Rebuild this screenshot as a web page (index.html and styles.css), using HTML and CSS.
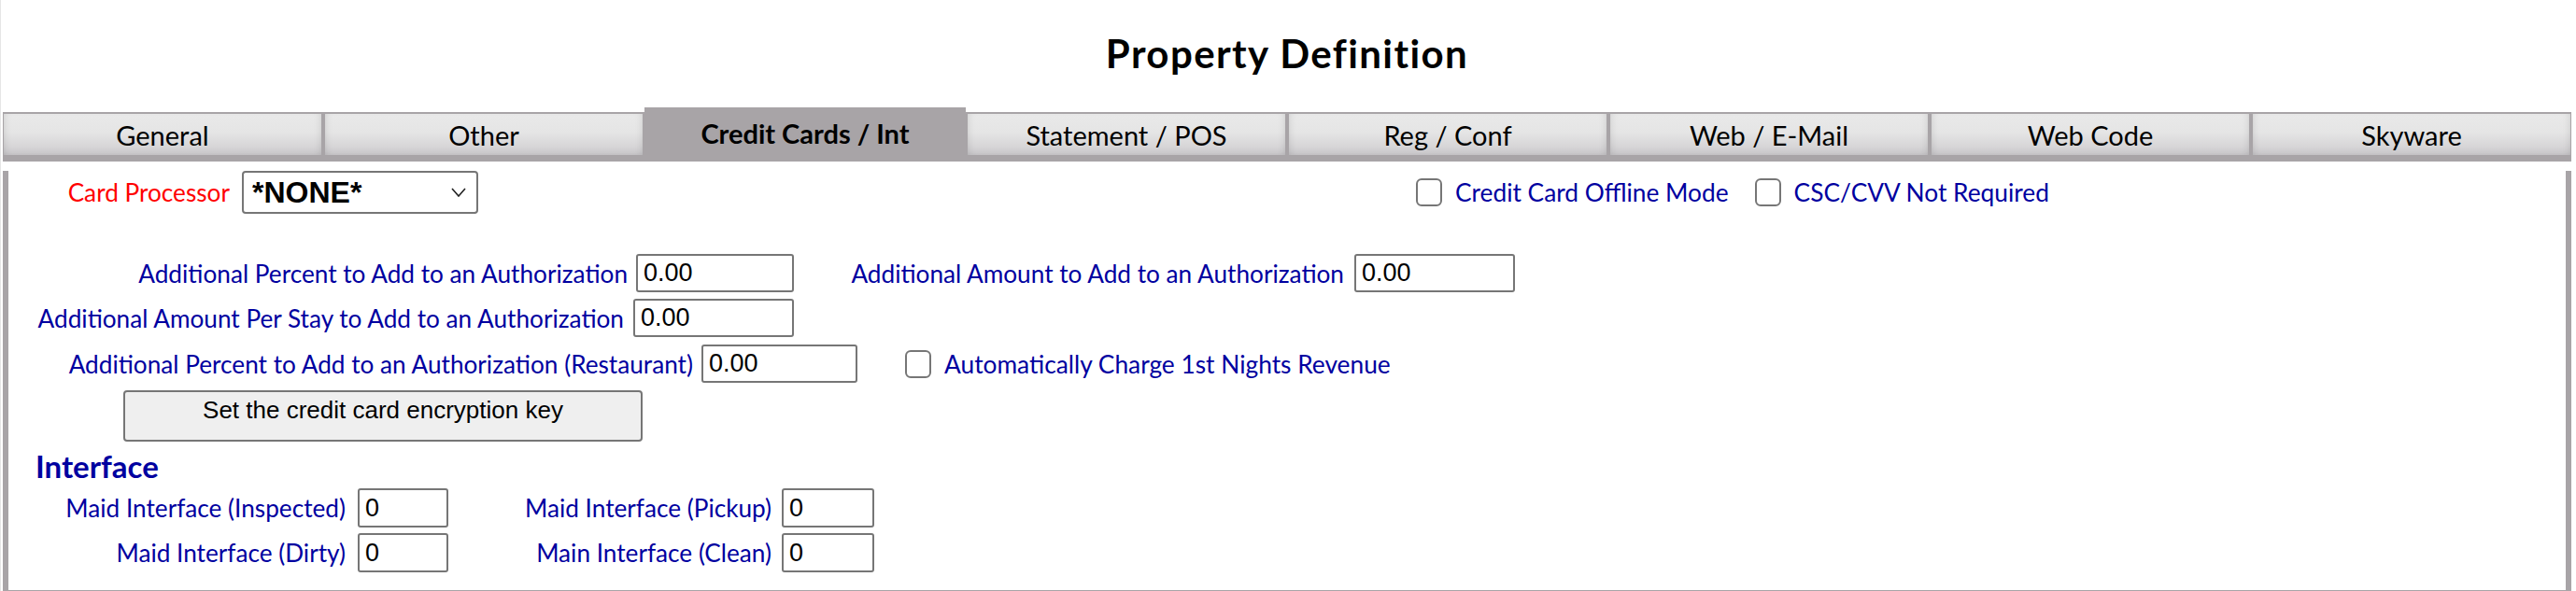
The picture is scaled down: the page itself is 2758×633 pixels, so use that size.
FILE: index.html
```html
<!DOCTYPE html>
<html lang="en">
<head>
    <meta charset="UTF-8">
    <title>Property Definition</title>
    <link rel="stylesheet" href="styles.css">
</head>
<body>
<div class="page">
    <h1 class="title">Property Definition</h1>

    <!-- Tabs -->
    <div class="tabs">
        <div class="tab">General</div>
        <div class="tab">Other</div>
        <div class="tab active">Credit Cards / Int</div>
        <div class="tab">Statement / POS</div>
        <div class="tab">Reg / Conf</div>
        <div class="tab">Web / E-Mail</div>
        <div class="tab">Web Code</div>
        <div class="tab">Skyware</div>
    </div>

    <div class="panel">
        <!-- Processor row -->
        <div class="row row-top">
            <div class="cell cell-proc">
                <label class="lbl lbl-red" for="processor">Card Processor</label>
            </div>
            <span class="select-wrap">
                <select id="processor" class="select">
                    <option>*NONE*</option>
                </select>
                <svg class="chevron" width="16" height="10" viewBox="0 0 16 10">
                    <polyline points="1,1 8,9 15,1" fill="none" stroke="#222" stroke-width="1.6"/>
                </svg>
            </span>
            <div class="checks checks-top">
                <label class="check"><input type="checkbox" class="box"><span>Credit Card Offline Mode</span></label>
                <label class="check"><input type="checkbox" class="box"><span>CSC/CVV Not Required</span></label>
            </div>
        </div>

        <!-- Authorization amounts -->
        <div class="row row-auth1">
            <div class="cell cell-841">
                <span class="lbl">Additional Percent to Add to an Authorization</span>
                <input class="txt w-169" value="0.00">
            </div>
            <div class="cell cell-772">
                <span class="lbl">Additional Amount to Add to an Authorization</span>
                <input class="txt w-172" value="0.00">
            </div>
        </div>
        <div class="row row-auth2">
            <div class="cell cell-841 gap-10">
                <span class="lbl">Additional Amount Per Stay to Add to an Authorization</span>
                <input class="txt w-172" value="0.00">
            </div>
        </div>
        <div class="row row-auth3">
            <div class="cell cell-909">
                <span class="lbl">Additional Percent to Add to an Authorization (Restaurant)</span>
                <input class="txt w-167" value="0.00">
            </div>
            <div class="checks checks-auto">
                <label class="check"><input type="checkbox" class="box"><span>Automatically Charge 1st Nights Revenue</span></label>
            </div>
        </div>

        <button class="key-btn">Set the credit card encryption key</button>

        <!-- Interface -->
        <h2 class="section">Interface</h2>
        <div class="maid-grid">
            <div class="cell gap-13">
                <span class="lbl">Maid Interface (Inspected)</span>
                <input class="txt w-97" value="0">
            </div>
            <div class="cell gap-11">
                <span class="lbl">Maid Interface (Pickup)</span>
                <input class="txt w-99" value="0">
            </div>
            <div class="cell gap-13">
                <span class="lbl">Maid Interface (Dirty)</span>
                <input class="txt w-97" value="0">
            </div>
            <div class="cell gap-11">
                <span class="lbl">Main Interface (Clean)</span>
                <input class="txt w-99" value="0">
            </div>
        </div>
    </div>
</div>
</body>
</html>
```

FILE: styles.css
```css
body {
    margin: 0;
    background: #fff;
    font-family: Lato, "Liberation Sans", sans-serif;
}
.page {
    border-left: 1px solid #e6e6e6;
    padding: 0 5px 0 2px;
}
.title {
    margin: 0;
    padding-top: 32px;
    font-size: 42px;
    line-height: 50px;
    letter-spacing: 1.4px;
    font-weight: bold;
    text-align: center;
    color: #000;
}

/* tabs */
.tabs {
    display: grid;
    grid-template-columns: repeat(8, 1fr);
    gap: 4px;
    margin-top: 38px;
    padding: 2px 1px 7px;
    background: #a8a4a7;
}
.tab {
    height: 44px;
    display: flex;
    align-items: center;
    justify-content: center;
    font-size: 29px;
    color: #000;
    background: linear-gradient(#e9e9e9, #e5e5e5 45%, #cecccf);
    box-shadow: inset 0 -6px 8px -4px rgba(0, 0, 0, 0.06), inset 6px 0 8px -6px rgba(0, 0, 0, 0.12), inset -6px 0 8px -6px rgba(0, 0, 0, 0.12);
}
.tab.active {
    margin: -7px -2px -3px;
    height: auto;
    background: #a8a4a7;
    box-shadow: none;
    font-weight: bold;
}

/* panel */
.panel {
    height: 449px;
    border: 6px solid #a8a4a7;
    border-top: 0;
    border-bottom-width: 8px;
    background: #fff;
}
.row {
    display: flex;
    align-items: center;
}
.cell {
    display: flex;
    align-items: center;
    justify-content: flex-end;
    gap: 9px;
}
.lbl {
    font-size: 26.2px;
    color: #0000a0;
    white-space: nowrap;
}
.lbl-red {
    color: #f00;
}

.row-top {
    margin-top: 10px;
    height: 46px;
}
.cell-proc {
    width: 237px;
}
.select-wrap {
    position: relative;
    margin-left: 13px;
}
.select {
    appearance: none;
    -webkit-appearance: none;
    display: block;
    width: 253px;
    height: 46px;
    margin: 0;
    padding: 0 0 0 9px;
    border: 2px solid #767676;
    border-radius: 4px;
    background: #fff;
    color: #000;
    font-family: "Liberation Sans", Arial, sans-serif;
    font-size: 32px;
    font-weight: bold;
}
.chevron {
    position: absolute;
    right: 13px;
    top: 18px;
}

.checks {
    display: flex;
    align-items: center;
    gap: 28px;
}
.checks-top {
    margin-left: 1004px;
}
.checks-auto {
    margin-left: 51px;
}
.check {
    display: flex;
    align-items: center;
    gap: 14px;
    font-size: 26.3px;
    color: #0000a0;
    white-space: nowrap;
}
.box {
    appearance: none;
    -webkit-appearance: none;
    width: 28px;
    height: 30px;
    margin: 0;
    border: 2px solid #767676;
    border-radius: 6px;
    background: #fff;
}

.txt {
    box-sizing: border-box;
    height: 41px;
    margin: 0;
    padding: 0 6px;
    border: 2px solid #767676;
    border-radius: 3px;
    font-family: "Liberation Sans", Arial, sans-serif;
    font-size: 27px;
    color: #000;
    background: #fff;
}
.w-97 { width: 97px; }
.w-99 { width: 99px; }
.w-167 { width: 167px; }
.w-169 { width: 169px; }
.w-172 { width: 172px; }

.row-auth1 {
    margin-top: 43px;
}
.row-auth2 {
    margin-top: 7px;
}
.row-auth3 {
    margin-top: 8px;
}
.cell-841 { width: 841px; }
.cell-909 { width: 909px; }
.cell-772 { width: 772px; gap: 11px; }
.gap-10 { gap: 10px; }
.gap-11 { gap: 11px; }
.gap-13 { gap: 13px; }

.key-btn {
    display: block;
    width: 556px;
    margin: 8px 0 0 123px;
    padding: 4px 0 17px;
    border: 2px solid #767676;
    border-radius: 4px;
    background: #efefef;
    font-family: "Liberation Sans", Arial, sans-serif;
    font-size: 26px;
    line-height: 30px;
    color: #000;
    text-align: center;
}

.section {
    margin: 8px 0 0 29px;
    font-size: 33px;
    line-height: 36px;
    font-weight: bold;
    color: #0000a0;
}
.maid-grid {
    display: grid;
    grid-template-columns: 471px 456px;
    row-gap: 6px;
    margin-top: 6px;
}
.maid-grid .txt {
    height: 42px;
}
```
